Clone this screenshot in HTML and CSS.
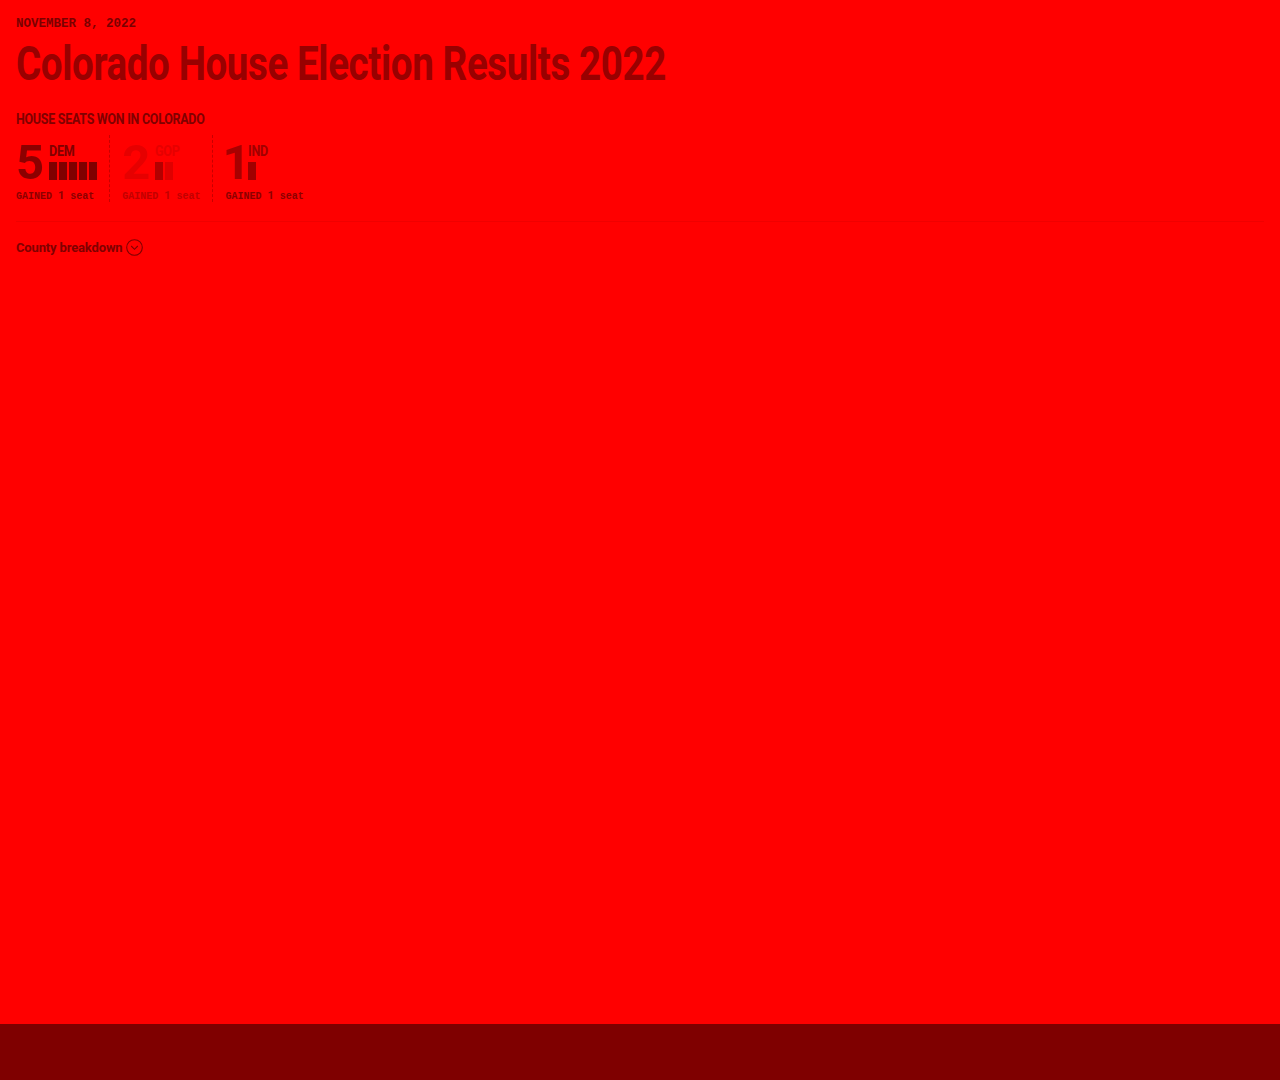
FILE: index.html
```html
<!DOCTYPE html>
<html lang="en">
<head>
<meta charset="utf-8">
<title>Colorado House Election Results 2022</title>
<link rel="stylesheet" href="styles.css">
</head>
<body>
<div class="page">
  <main class="content">
    <div class="date">NOVEMBER 8, 2022</div>
    <h1 class="title"><span class="title-text">Colorado House Election Results 2022</span></h1>
    <section class="seats">
      <h2 class="seats-label"><span class="seats-text">HOUSE SEATS WON IN COLORADO</span></h2>
      <div class="parties">
        <div class="party dem">
          <div class="party-top">
            <span class="count">5</span>
            <div class="party-info">
              <span class="name">DEM</span>
              <div class="bars">
                <span class="bar"></span><span class="bar"></span><span class="bar"></span><span class="bar"></span><span class="bar"></span>
              </div>
            </div>
          </div>
          <div class="gained">GAINED <span class="num">1</span> <span class="unit">seat</span></div>
        </div>
        <div class="party gop">
          <div class="party-top">
            <span class="count">2</span>
            <div class="party-info">
              <span class="name">GOP</span>
              <div class="bars">
                <span class="bar"></span><span class="bar light"></span>
              </div>
            </div>
          </div>
          <div class="gained">GAINED <span class="num">1</span> <span class="unit">seat</span></div>
        </div>
        <div class="party ind">
          <div class="party-top">
            <span class="count">1</span>
            <div class="party-info">
              <span class="name">IND</span>
              <div class="bars">
                <span class="bar"></span>
              </div>
            </div>
          </div>
          <div class="gained">GAINED <span class="num">1</span> <span class="unit">seat</span></div>
        </div>
      </div>
    </section>
    <hr class="rule">
    <button class="breakdown" type="button"><span>County breakdown</span>
      <svg class="chev" width="17" height="17" viewBox="0 0 17 17" aria-hidden="true">
        <circle cx="8.5" cy="8.5" r="7.8" fill="none" stroke="currentColor" stroke-width="1.1"/>
        <path d="M5.2 7 L8.5 10.3 L11.8 7" fill="none" stroke="currentColor" stroke-width="1.1"/>
      </svg>
    </button>
  </main>
  <footer class="footer"></footer>
</div>
</body>
</html>
```

FILE: styles.css
```css
* { box-sizing: border-box; }
html, body { margin: 0; padding: 0; }
body {
  background: #ff0000;
  font-family: Roboto, "Liberation Sans", sans-serif;
  color: #8a0000;
}
.page {
  min-height: 1080px;
  display: flex;
  flex-direction: column;
}
.content {
  flex: 1;
  padding: 17px 16px 0 16px;
}
.date {
  font-family: "Liberation Mono", "DejaVu Sans Mono", monospace;
  font-weight: 700;
  font-size: 12.5px;
  line-height: 14px;
  color: #7a0000;
}
.title {
  margin: 7px 0 0 0;
  font-family: Roboto, sans-serif;
  font-weight: 700;
  font-size: 49px;
  line-height: 52px;
  height: 52px;
  color: #990000;
  white-space: nowrap;
}
.title-text {
  display: inline-block;
  letter-spacing: -0.5px;
  transform: scaleX(0.787);
  transform-origin: left top;
}
.seats { margin-top: 21px; }
.seats-label {
  margin: 0;
  font-family: Roboto, sans-serif;
  font-weight: 700;
  font-size: 14px;
  line-height: 16px;
  color: #800000;
  white-space: nowrap;
}
.seats-text {
  display: inline-block;
  letter-spacing: -0.3px;
  transform: scaleX(0.89);
  transform-origin: left top;
}
.parties {
  display: flex;
  margin-top: 8px;
}
.party {
  padding: 0 12px;
  border-left: 1px dashed #c80000;
  height: 67px;
}
.party:first-child { padding-left: 0; border-left: none; }
.party-top { display: flex; align-items: flex-start; height: 55px; }
.count {
  font-family: Roboto, sans-serif;
  font-weight: 700;
  font-size: 49px;
  line-height: 48px;
  letter-spacing: -1px;
  margin-top: 4px;
  margin-right: 6px;
}
.ind .count { margin-left: -3px; margin-right: -2px; }
.party-info { display: flex; flex-direction: column; padding-top: 9px; }
.name {
  display: inline-block;
  font-weight: 700;
  font-size: 14px;
  line-height: 14px;
  letter-spacing: -0.3px;
  transform: scaleX(0.9);
  transform-origin: left top;
}
.bars { display: flex; gap: 2px; margin-top: 4px; }
.bar { width: 8px; height: 18px; background: #7f0000; }
.dem .count { color: #8c0000; }
.dem .name { color: #800000; }
.gop .count { color: #e60000; }
.gop .name { color: #e60000; }
.gop .bar { background: #b30000; }
.gop .bar.light { background: #e00000; }
.gop .gained { color: #c20000; }
.ind .count { color: #a80000; }
.ind .name { color: #a00000; }
.ind .bar { background: #a00000; }
.gained {
  font-family: "Liberation Mono", monospace;
  font-weight: 700;
  font-size: 10px;
  line-height: 12px;
  color: #8c0000;
  white-space: nowrap;
}
.gained .num { font-family: Roboto, sans-serif; font-size: 11px; }
.rule {
  margin: 19px 0 0 0;
  border: none;
  border-top: 1px solid #f00000;
  height: 0;
}
.breakdown {
  margin-top: 17px;
  padding: 0;
  border: none;
  background: none;
  display: flex;
  align-items: center;
  gap: 4px;
  font-family: Roboto, sans-serif;
  font-weight: 700;
  font-size: 13px;
  line-height: 16px;
  letter-spacing: -0.15px;
  color: #800000;
}
.chev { display: block; }
.footer {
  height: 56px;
  background: #7f0000;
}
```
